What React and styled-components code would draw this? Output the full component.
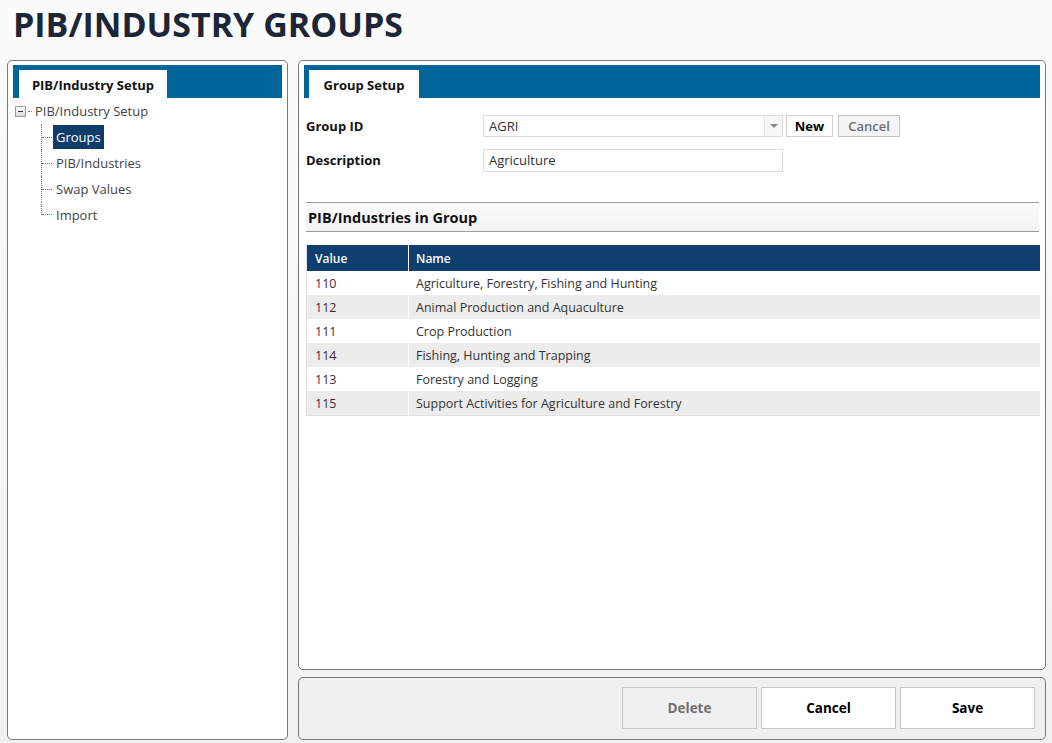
import React from 'react';
import styled, { createGlobalStyle } from 'styled-components';

const GlobalStyle = createGlobalStyle`
    html, body {
        margin: 0;
        padding: 0;
    }
    body {
        background: linear-gradient(180deg, #fbfbfb 0%, #f1f1f1 100%);
        font-family: "Open Sans", "Noto Sans", sans-serif;
        color: #333;
    }
`;

const Page = styled.div`
    width: 1052px;
    height: 743px;
    box-sizing: border-box;
    padding: 0 6px 3px 7px;
    display: flex;
    flex-direction: column;
`;

const Title = styled.h1`
    margin: 0;
    height: 60px;
    padding-left: 6px;
    box-sizing: border-box;
    padding-top: 1px;
    font-size: 34px;
    font-weight: 700;
    line-height: 46px;
    color: #1b2638;
    text-shadow: 1px 1px 0 #fff, -1px -1px 0 #fff;
`;

const Body = styled.div`
    flex: 1;
    display: grid;
    grid-template-columns: 281px 1fr;
    gap: 10px;
    min-height: 0;
`;

const Panel = styled.div`
    box-sizing: border-box;
    border: 1px solid #7a7a7a;
    border-radius: 5px;
    background: ${(p) => (p.$muted ? '#f0f0f0' : '#fff')};
    padding: 4px 5px;
    display: flex;
    flex-direction: column;
    min-height: 0;
`;

const RightColumn = styled.div`
    display: flex;
    flex-direction: column;
    gap: 7px;
    min-height: 0;
`;

const MainPanel = styled(Panel)`
    flex: 1;
`;

const TabStrip = styled.div`
    background: #006699;
    height: 33px;
    box-sizing: border-box;
    padding: 5px 0 0 ${(p) => p.$indent}px;
    display: flex;
`;

const Tab = styled.div`
    width: ${(p) => p.$width}px;
    background: #fff;
    font-size: 13px;
    font-weight: 700;
    color: #111;
    display: flex;
    align-items: center;
    justify-content: center;
    padding-top: 1px;
`;

const Tree = styled.div`
    display: flex;
    flex-direction: column;
    padding-left: 2px;
`;

const TreeRoot = styled.div`
    height: 26px;
    display: flex;
    align-items: center;
    font-size: 13px;
    color: #444;
`;

const Expander = styled.span`
    width: 9px;
    height: 9px;
    border: 1px solid #999;
    background: linear-gradient(180deg, #fff, #d8d8d8);
    position: relative;
    margin-right: 2px;
    &::after {
        content: '';
        position: absolute;
        left: 2px;
        top: 4px;
        width: 5px;
        height: 1px;
        background: #333;
    }
`;

const RootDots = styled.span`
    width: 4px;
    border-top: 1px dotted #777;
    margin-right: 3px;
`;

const TreeChildren = styled.div`
    margin-left: 26px;
    display: flex;
    flex-direction: column;
`;

const TreeItem = styled.div`
    height: 26px;
    display: flex;
    align-items: center;
    border-left: 1px dotted #777;
    &:last-child {
        height: 13px;
        align-items: flex-end;
        margin-bottom: 13px;
    }
    &::before {
        content: '';
        width: 10px;
        border-top: 1px dotted #777;
        margin-right: 1px;
    }
`;

const ItemLabel = styled.span`
    font-size: 13px;
    padding: 2px 3px;
    line-height: 20px;
    color: ${(p) => (p.$active ? '#fff' : '#444')};
    background: ${(p) => (p.$active ? '#0e3d6b' : 'transparent')};
`;

const LastLabel = styled(ItemLabel)`
    transform: translateY(12px);
`;

const Form = styled.div`
    padding: 17px 0 0 2px;
    display: flex;
    flex-direction: column;
    gap: 12px;
`;

const FormRow = styled.div`
    display: flex;
    align-items: center;
    height: 22px;
`;

const Label = styled.div`
    width: 177px;
    font-size: 13px;
    font-weight: 700;
    color: #111;
`;

const Field = styled.div`
    width: 300px;
    height: ${(p) => (p.$tall ? 23 : 22)}px;
    box-sizing: border-box;
    border: 1px solid #dcdcdc;
    background: #fff;
    display: flex;
    align-items: center;
    font-size: 13px;
    color: #333;
`;

const FieldText = styled.span`
    flex: 1;
    padding-left: 5px;
`;

const DropArrow = styled.span`
    width: 17px;
    height: 100%;
    border-left: 1px solid #e2e2e2;
    background: #f7f7f7;
    display: flex;
    align-items: center;
    justify-content: center;
    &::after {
        content: '';
        border-left: 4px solid transparent;
        border-right: 4px solid transparent;
        border-top: 4px solid #888;
    }
`;

const SmallButton = styled.button`
    height: 22px;
    width: ${(p) => p.$width}px;
    margin-left: ${(p) => p.$gap}px;
    box-sizing: border-box;
    border: 1px solid ${(p) => (p.$disabled ? '#c4c4c4' : '#d0d0d0')};
    background: ${(p) => (p.$disabled ? '#f4f4f4' : '#fff')};
    color: ${(p) => (p.$disabled ? '#6e6e6e' : '#000')};
    font-family: inherit;
    font-size: 13px;
    font-weight: ${(p) => (p.$disabled ? 600 : 700)};
    padding: 0;
    display: flex;
    align-items: center;
    justify-content: center;
`;

const SectionHeader = styled.div`
    margin: 31px 1px 0 2px;
    height: 30px;
    box-sizing: border-box;
    border-top: 1px solid #9a9a9a;
    border-bottom: 1px solid #9a9a9a;
    background: linear-gradient(180deg, #fafafa, #f3f3f3);
    display: flex;
    align-items: center;
    padding-left: 2px;
    font-size: 14.5px;
    font-weight: 700;
    color: #111;
`;

const Table = styled.table`
    margin: 13px 0 0 2px;
    width: calc(100% - 2px);
    border-collapse: collapse;
    font-size: 12.5px;
    border-left: 1px solid #e0e0e0;
    border-bottom: 1px solid #e0e0e0;
`;

const HeadCell = styled.th`
    height: 26px;
    padding: 0 0 0 ${(p) => (p.$first ? 8 : 7)}px;
    background: #0e3f6f;
    color: #fff;
    font-size: 12px;
    font-weight: 600;
    text-align: left;
    width: ${(p) => (p.$first ? '93px' : 'auto')};
    border-right: 1px solid #fff;
    &:last-child {
        border-right: none;
    }
`;

const Row = styled.tr`
    background: ${(p) => (p.$alt ? '#ececec' : '#fff')};
`;

const Cell = styled.td`
    height: 24px;
    padding: 0 0 0 ${(p) => (p.$value ? 8 : 7)}px;
    color: ${(p) => (p.$value ? '#4a1f3a' : '#333')};
    border-right: ${(p) => (p.$value ? '1px solid #fff' : 'none')};
`;

const Footer = styled(Panel)`
    height: 63px;
    flex: none;
    flex-direction: row;
    justify-content: flex-end;
    align-items: flex-start;
    padding: 9px 10px 0 0;
    gap: 4px;
`;

const BigButton = styled.button`
    width: 135px;
    height: 42px;
    box-sizing: border-box;
    border: 1px solid #c8c8c8;
    background: ${(p) => (p.$disabled ? '#f0f0f0' : '#fff')};
    color: ${(p) => (p.$disabled ? '#6f6f6f' : '#000')};
    font-family: inherit;
    font-size: 13.5px;
    font-weight: 700;
    padding: 0;
`;

const industries = [
    ['110', 'Agriculture, Forestry, Fishing and Hunting'],
    ['112', 'Animal Production and Aquaculture'],
    ['111', 'Crop Production'],
    ['114', 'Fishing, Hunting and Trapping'],
    ['113', 'Forestry and Logging'],
    ['115', 'Support Activities for Agriculture and Forestry'],
];

const treeItems = ['Groups', 'PIB/Industries', 'Swap Values', 'Import'];

export default function App() {
    return (
        <>
            <GlobalStyle />
            <Page>
                <Title>PIB/INDUSTRY GROUPS</Title>
                <Body>
                    <Panel>
                        <TabStrip $indent={6}>
                            <Tab $width={148}>PIB/Industry Setup</Tab>
                        </TabStrip>
                        <Tree>
                            <TreeRoot>
                                <Expander />
                                <RootDots />
                                PIB/Industry Setup
                            </TreeRoot>
                            <TreeChildren>
                                {treeItems.map((item, i) =>
                                    i === treeItems.length - 1 ? (
                                        <TreeItem key={item}>
                                            <LastLabel>{item}</LastLabel>
                                        </TreeItem>
                                    ) : (
                                        <TreeItem key={item}>
                                            <ItemLabel $active={i === 0}>{item}</ItemLabel>
                                        </TreeItem>
                                    )
                                )}
                            </TreeChildren>
                        </Tree>
                    </Panel>
                    <RightColumn>
                        <MainPanel>
                            <TabStrip $indent={5}>
                                <Tab $width={110}>Group Setup</Tab>
                            </TabStrip>
                            <Form>
                                <FormRow>
                                    <Label>Group ID</Label>
                                    <Field>
                                        <FieldText>AGRI</FieldText>
                                        <DropArrow />
                                    </Field>
                                    <SmallButton $width={47} $gap={3}>New</SmallButton>
                                    <SmallButton $width={62} $gap={5} $disabled>Cancel</SmallButton>
                                </FormRow>
                                <FormRow>
                                    <Label>Description</Label>
                                    <Field $tall>
                                        <FieldText>Agriculture</FieldText>
                                    </Field>
                                </FormRow>
                            </Form>
                            <SectionHeader>PIB/Industries in Group</SectionHeader>
                            <Table>
                                <thead>
                                    <tr>
                                        <HeadCell $first>Value</HeadCell>
                                        <HeadCell>Name</HeadCell>
                                    </tr>
                                </thead>
                                <tbody>
                                    {industries.map(([value, name], i) => (
                                        <Row key={value} $alt={i % 2 === 1}>
                                            <Cell $value>{value}</Cell>
                                            <Cell>{name}</Cell>
                                        </Row>
                                    ))}
                                </tbody>
                            </Table>
                        </MainPanel>
                        <Footer $muted>
                            <BigButton $disabled>Delete</BigButton>
                            <BigButton>Cancel</BigButton>
                            <BigButton>Save</BigButton>
                        </Footer>
                    </RightColumn>
                </Body>
            </Page>
        </>
    );
}
